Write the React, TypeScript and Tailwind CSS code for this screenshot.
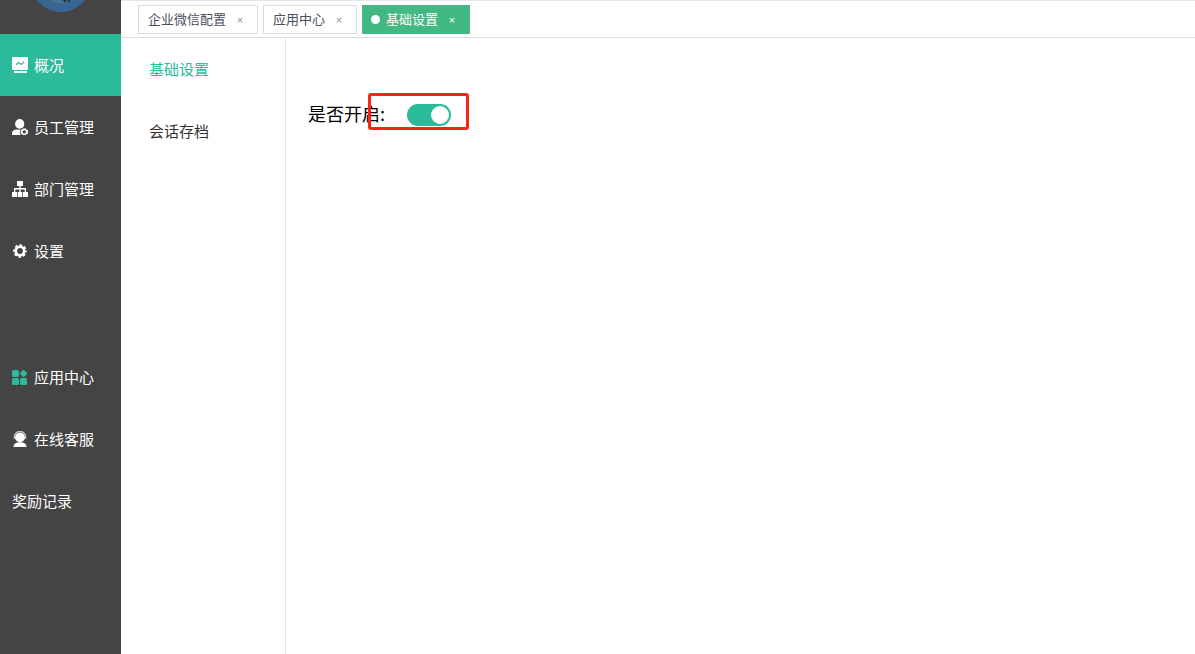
import { useState } from 'react';
import type { ReactNode } from 'react';

const font = "font-['Noto_Sans_CJK_SC','Liberation_Sans',sans-serif]";

function OverviewIcon() {
  return (
    <svg width="16" height="16" viewBox="0 0 16 16" fill="none">
      <rect x="0" y="0" width="16" height="13" rx="1" fill="#fff" />
      <path d="M4 7.8 6.5 5.5 9 7.5 12.2 5" stroke="#2bba9a" strokeWidth="1.2" />
      <rect x="2" y="14" width="13" height="2" fill="#fff" />
    </svg>
  );
}

function StaffIcon() {
  return (
    <svg width="16" height="16" viewBox="0 0 16 16" fill="#fff">
      <ellipse cx="7.7" cy="4.9" rx="4.6" ry="4.9" />
      <path d="M0 16v-1.6c0-2.6 2.2-3.8 5-3.8h3.6a4.6 4.6 0 0 0 .2 5.4z" />
      <path
        fillRule="evenodd"
        d="M10.8 9.6h3l.5 1 1.3.2.6 2.1-.6 2.1-1.3.2-.5.8h-3l-.5-.8-1.2-.2-.6-2.1.6-2.1 1.2-.2zM12.3 11.2a1.7 1.7 0 1 0 0 3.4 1.7 1.7 0 0 0 0-3.4z"
      />
    </svg>
  );
}

function DepartmentIcon() {
  return (
    <svg width="16" height="16" viewBox="0 0 16 16" fill="#fff">
      <path d="M5 0h6v5H8.7v2H14v4h2v5h-5v-5h1.7V8.4H8.7V11h1.6v5H5.7v-5h1.6V8.4h-4V11H5v5H0v-5h2V7h5.3V5H5z" />
    </svg>
  );
}

function GearIcon() {
  return (
    <svg width="16" height="16" viewBox="0 0 16 16">
      <circle cx="8" cy="8" r="4.2" fill="none" stroke="#fff" strokeWidth="2.6" />
      <circle cx="8" cy="8" r="5.7" fill="none" stroke="#fff" strokeWidth="2.2" strokeDasharray="2.6 1.877" strokeDashoffset="1.3" />
    </svg>
  );
}

function AppsIcon() {
  return (
    <svg width="16" height="16" viewBox="0 0 16 16" fill="#2bba9a">
      <rect x="0" y="1" width="7" height="7" rx="1.6" />
      <rect x="0" y="9" width="7" height="7" rx="1.6" />
      <rect x="8" y="9" width="7" height="7" rx="1.6" />
      <rect x="8.8" y="1.7" width="5.6" height="5.6" rx="1" transform="rotate(45 11.6 4.5)" />
    </svg>
  );
}

function ServiceIcon() {
  return (
    <svg width="16" height="16" viewBox="0 0 16 16">
      <path d="M2.4 8V6a5.6 5.6 0 0 1 11.2 0v2" fill="none" stroke="#b9cbdc" strokeWidth="1.2" />
      <circle cx="8" cy="6.4" r="4.9" fill="#fff" />
      <path d="M1.5 16c0-3 2-4.2 4.7-4.8h3.6c2.7.6 4.7 1.8 4.7 4.8z" fill="#fff" />
    </svg>
  );
}

type Item = { label: string; icon?: ReactNode; active?: boolean };

const mainItems: Item[] = [
  { label: '概况', icon: <OverviewIcon />, active: true },
  { label: '员工管理', icon: <StaffIcon /> },
  { label: '部门管理', icon: <DepartmentIcon /> },
  { label: '设置', icon: <GearIcon /> },
];

const extraItems: Item[] = [
  { label: '应用中心', icon: <AppsIcon /> },
  { label: '在线客服', icon: <ServiceIcon /> },
  { label: '奖励记录' },
];

const tabs = [
  { label: '企业微信配置' },
  { label: '应用中心' },
  { label: '基础设置', active: true },
];

function MenuItem({ label, icon, active }: Item) {
  return (
    <li>
      <a
        href="#"
        className={`flex h-[62px] items-center gap-1.5 pl-3 text-[15px] text-white ${active ? 'bg-[#2bba9a]' : ''}`}
      >
        {icon}
        <span>{label}</span>
      </a>
    </li>
  );
}

function Avatar() {
  return (
    <svg width="60" height="60" viewBox="0 0 60 60" className="shrink-0">
      <circle cx="30" cy="30" r="30" fill="#386692" />
      <path d="M17 46c5 5 11 6 20 5l3-5z" fill="#46718f" />
      <path d="M30 46l4 5 2-3 3 3v-5z" fill="#26384a" />
    </svg>
  );
}

export default function App() {
  const [enabled, setEnabled] = useState(true);

  return (
    <div className={`flex min-h-screen bg-white ${font}`}>
      <aside className="w-[121px] shrink-0 bg-[#444]">
        <div className="flex h-[34px] items-end justify-center overflow-hidden pb-[22px]">
          <Avatar />
        </div>
        <nav>
          <ul>
            {mainItems.map((item) => (
              <MenuItem key={item.label} {...item} />
            ))}
          </ul>
          <ul className="mt-16">
            {extraItems.map((item) => (
              <MenuItem key={item.label} {...item} />
            ))}
          </ul>
        </nav>
      </aside>

      <div className="flex min-w-0 flex-1 flex-col">
        <header className="flex gap-[5px] border-y border-t-[#e6e6e6] border-b-[#d8dce5] pt-1 pb-[3px] pl-[17px]">
          {tabs.map((tab) => (
            <div
              key={tab.label}
              className={`flex h-[29px] items-center border pr-[11px] text-[13px] leading-[25px] ${
                tab.active
                  ? 'border-[#42b983] bg-[#42b983] pl-2 text-white'
                  : 'border-[#d8dce5] bg-white pl-[9px] text-[#495060]'
              }`}
            >
              {tab.active && <span className="mr-1.5 size-[9px] rounded-full bg-white" />}
              <a href="#" className="pb-0.5">{tab.label}</a>
              <button
                type="button"
                aria-label={`关闭${tab.label}`}
                className={`ml-2 w-3 pt-0.5 text-center font-['Liberation_Sans',sans-serif] text-[11px] ${tab.active ? 'text-white' : 'text-[#8b909a]'}`}
              >
                ×
              </button>
            </div>
          ))}
        </header>

        <div className="flex flex-1">
          <nav className="w-[165px] shrink-0 border-r border-[#e6e6e6] text-[15px]">
            <a href="#" className="flex h-[62px] items-center pl-7 text-[#2bba9a]">
              基础设置
            </a>
            <a href="#" className="flex h-[62px] items-center pl-7 text-[#333]">
              会话存档
            </a>
          </nav>

          <main className="flex-1 pt-[55px] pl-[22px]">
            <div className="relative flex h-[37px] w-[161px] items-center justify-between pt-1 pr-[18px] text-[18px] text-black">
              <label htmlFor="enabled" className="whitespace-nowrap">
                是否开启:
              </label>
              <input
                id="enabled"
                type="checkbox"
                role="switch"
                checked={enabled}
                onChange={(e) => setEnabled(e.target.checked)}
                className="mt-0.5 h-[22px] w-11 appearance-none rounded-full bg-[#ccc] p-0.5 before:block before:size-[18px] before:rounded-full before:bg-white checked:bg-[#2bba9a] checked:before:ml-[22px]"
              />
              <div className="pointer-events-none absolute top-0 right-0 h-[37px] w-[101px] rounded-[3px] border-3 border-[#fd2116]" />
            </div>
          </main>
        </div>
      </div>
    </div>
  );
}
